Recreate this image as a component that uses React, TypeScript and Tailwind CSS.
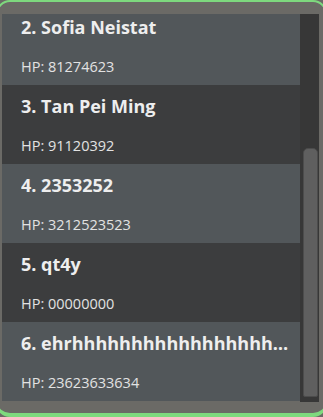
import React from "react";

const people = [
  { name: "2. Sofia Neistat", hp: "81274623" },
  { name: "3. Tan Pei Ming", hp: "91120392" },
  { name: "4. 2353252", hp: "3212523523" },
  { name: "5. qt4y", hp: "00000000" },
  { name: "6. ehrhhhhhhhhhhhhhhhhhhhhhhhhhhhhhhh", hp: "23623633634" },
];

export default function App() {
  return (
    <div className="w-[323px] h-[417px] overflow-hidden bg-[#6b6a66]" style={{ fontFamily: '"Open Sans", "Noto Sans", sans-serif' }}>
      <div className="h-[417px] -mx-[4px] border-t-2 border-b-[4px] border-x-2 border-[#7ed97e] rounded-[14px] bg-[#6b6a66] pt-[12px] pb-[9px] pl-[4px] pr-[6px] flex">
        <div className="flex-1 h-[388px] overflow-hidden">
          <div className="-mt-[8px]">
            {people.map((p, i) => (
              <div
                key={i}
                className={`h-[79px] pl-[19px] pr-[8px] pt-[8px] ${i % 2 === 0 ? "bg-[#52575a]" : "bg-[#3c3d3e]"}`}
              >
                <div className="text-[18px] font-bold text-[#eeeeee] truncate leading-[26px]">{p.name}</div>
                <div className="text-[14.5px] text-[#e2e2e2] mt-[17px] leading-[20px]">HP: {p.hp}</div>
              </div>
            ))}
          </div>
        </div>
        <div className="w-[19px] h-[388px] bg-[#373737] pl-[3px] pr-[1px] pt-[134px] pb-[5px]">
          <div className="h-full rounded-t-[5px] rounded-b-[2px] bg-[#5f5f5f] border border-[#4c4c4c]"></div>
        </div>
      </div>
    </div>
  );
}
